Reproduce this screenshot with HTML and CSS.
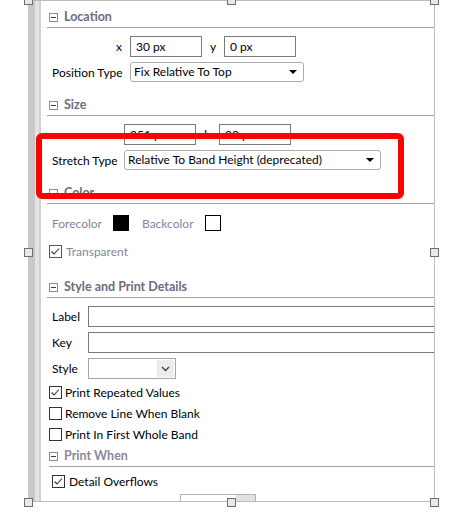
FILE: index.html
```html
<!DOCTYPE html>
<html lang="en">
<head>
<meta charset="utf-8">
<title>Properties</title>
<link rel="stylesheet" href="styles.css">
</head>
<body>
<div class="stage">
  <div class="panel">
    <div class="rail"></div>
    <div class="content">

      <div class="head head-first"><span class="tog"></span><span>Location</span></div>
      <div class="row r-xy">
        <span class="lab lab-loc">x</span>
        <span class="field f-72">30 px</span>
        <span class="lab lab-mid">y</span>
        <span class="field f-72">0 px</span>
      </div>
      <div class="row r-pos">
        <span class="lab lab-pos">Position Type</span>
        <span class="select s-pos">Fix Relative To Top<i class="caret"></i></span>
      </div>

      <div class="head head-size"><span class="tog"></span><span>Size</span></div>
      <div class="row r-wh">
        <span class="lab lab-size">w</span>
        <span class="field f-72">251 px</span>
        <span class="lab lab-midh">h</span>
        <span class="field f-72">22 px</span>
      </div>
      <div class="row r-stretch">
        <span class="lab lab-stretch">Stretch Type</span>
        <span class="select s-stretch">Relative To Band Height (deprecated)<i class="caret"></i></span>
      </div>

      <div class="head head-color"><span class="tog"></span><span>Color</span></div>
      <div class="row r-color dim">
        <span>Forecolor</span>
        <span class="swatch swatch-black"></span>
        <span class="back-lab">Backcolor</span>
        <span class="swatch swatch-white"></span>
      </div>
      <div class="check r-transp dim">
        <span class="box"><svg viewBox="0 0 13 13" width="13" height="13"><polyline points="2.5,6.5 5,9 10,3.5" /></svg></span>
        <span>Transparent</span>
      </div>

      <div class="head head-style"><span class="tog"></span><span>Style and Print Details</span></div>
      <div class="row r-label">
        <span class="lab lab-sp">Label</span>
        <span class="field f-wide"></span>
      </div>
      <div class="row r-key">
        <span class="lab lab-sp">Key</span>
        <span class="field f-wide"></span>
      </div>
      <div class="row r-style">
        <span class="lab lab-sp">Style</span>
        <span class="combo"><span class="combo-btn"><svg viewBox="0 0 9 6" width="9" height="6"><polyline points="1,1 4.5,4.5 8,1" /></svg></span></span>
      </div>
      <div class="check r-c1">
        <span class="box"><svg viewBox="0 0 13 13" width="13" height="13"><polyline points="2.5,6.5 5,9 10,3.5" /></svg></span>
        <span>Print Repeated Values</span>
      </div>
      <div class="check r-c2">
        <span class="box"></span>
        <span>Remove Line When Blank</span>
      </div>
      <div class="check r-c3">
        <span class="box"></span>
        <span>Print In First Whole Band</span>
      </div>

      <div class="head head-when"><span class="tog"></span><span>Print When</span></div>
      <div class="check r-detail">
        <span class="box"><svg viewBox="0 0 13 13" width="13" height="13"><polyline points="2.5,6.5 5,9 10,3.5" /></svg></span>
        <span>Detail Overflows</span>
      </div>
      <div class="expr-btn"></div>
    </div>
  </div>

  <span class="handle h-tl"></span>
  <span class="handle h-tc"></span>
  <span class="handle h-tr"></span>
  <span class="handle h-ml"></span>
  <span class="handle h-mr"></span>
  <span class="handle h-bl"></span>
  <span class="handle h-bc"></span>
  <span class="handle h-br"></span>

  <div class="callout"></div>
</div>
</body>
</html>
```
FILE: styles.css
```css
html, body {
  margin: 0;
  padding: 0;
  background: #ffffff;
}

.stage {
  position: relative;
  width: 457px;
  height: 519px;
  overflow: hidden;
  font-family: Lato, "Noto Sans", sans-serif;
  font-size: 12px;
  color: #000000;
}

/* property sheet */
.panel {
  margin-left: 28px;
  width: 407px;
  height: 502px;
  box-sizing: border-box;
  border-top: 1px solid #bdbdbd;
  border-right: 1px solid #bdbdbd;
  border-bottom: 1px solid #bdbdbd;
  display: flex;
  overflow: hidden;
}

.rail {
  flex: none;
  width: 13px;
  background: linear-gradient(to right, #c8c8c8 0 7px, #e3e3e3 7px 11px, #d0d0d0 11px 13px);
}

.content {
  flex: 1;
  min-width: 0;
  overflow: hidden;
  padding-top: 5px;
}

/* section headers */
.head {
  display: flex;
  align-items: center;
  gap: 6px;
  height: 21px;
  margin-left: 6px;
  padding-left: 2px;
  border-bottom: 1px solid #a3a3a3;
  font-weight: bold;
  font-size: 12.5px;
  color: #6c6c7c;
}

.tog {
  position: relative;
  flex: none;
  width: 9px;
  height: 9px;
  box-sizing: border-box;
  border: 1px solid #8c8c8c;
  margin-top: 2px;
}

.tog::after {
  content: "";
  position: absolute;
  left: 1px;
  right: 1px;
  top: 3px;
  height: 1px;
  background: #3c3c3c;
}

.head-size { margin-top: 12px; }
.head-color { margin-top: 12px; }
.head-style { margin-top: 18px; }
.head-when {
  margin-top: 4px;
  margin-left: 8px;
  padding-left: 0;
  color: #8a8a96;
}

/* rows */
.row {
  display: flex;
  align-items: center;
  margin-left: 11px;
}

.lab {
  flex: none;
  box-sizing: border-box;
}

.lab-loc {
  width: 78px;
  text-align: right;
  padding-right: 8px;
}

.lab-mid {
  width: 22px;
  text-align: center;
}

.lab-pos { width: 78px; }

.lab-size {
  width: 72px;
  text-align: right;
  padding-right: 8px;
}

.lab-midh {
  width: 23px;
  text-align: center;
}

.lab-stretch { width: 72px; }
.lab-sp { width: 36px; }

.field {
  flex: none;
  box-sizing: border-box;
  height: 21px;
  line-height: 19px;
  padding-left: 5px;
  border: 1px solid #7a7a7a;
  background: #ffffff;
}

.f-72 { width: 72px; }
.f-wide { width: 380px; }

.select {
  position: relative;
  flex: none;
  box-sizing: border-box;
  height: 20px;
  line-height: 18px;
  padding-left: 3px;
  border: 1px solid #adadad;
  border-radius: 3px;
  background: #ffffff;
}

.s-pos { width: 174px; }
.s-stretch { width: 257px; }

.caret {
  position: absolute;
  right: 6px;
  top: 7px;
  width: 0;
  height: 0;
  border-left: 4px solid transparent;
  border-right: 4px solid transparent;
  border-top: 4px solid #000000;
}

.r-xy { margin-top: 8px; }
.r-pos { margin-top: 5px; }
.r-wh { margin-top: 8px; }
.r-stretch { margin-top: 5px; }

/* colors */
.dim { color: #85859a; }

.r-color {
  margin-top: 10px;
  height: 18px;
}

.swatch {
  flex: none;
  width: 16px;
  height: 16px;
  box-sizing: border-box;
  margin-left: 11px;
}

.swatch-black { background: #000000; }

.swatch-white {
  background: #ffffff;
  border: 1px solid #000000;
}

.back-lab { margin-left: 13px; }

/* checkboxes */
.check {
  display: flex;
  align-items: center;
  height: 13px;
  margin-left: 8px;
  gap: 3px;
}

.box {
  flex: none;
  width: 13px;
  height: 13px;
  box-sizing: border-box;
  border: 1px solid #333333;
  background: #ffffff;
  position: relative;
}

.box svg {
  position: absolute;
  left: -1px;
  top: -1px;
}

.box polyline {
  fill: none;
  stroke: #333333;
  stroke-width: 1.1;
}

.r-transp { margin-top: 13px; gap: 4px; }
.r-transp .box { border-color: #555555; }

.r-label { margin-top: 8px; }
.r-key { margin-top: 5px; }
.r-style { margin-top: 5px; }

.combo {
  flex: none;
  display: flex;
  justify-content: flex-end;
  align-items: stretch;
  box-sizing: border-box;
  width: 88px;
  height: 21px;
  padding: 1px;
  border: 1px solid #a6a6a6;
  background: #ffffff;
}

.combo-btn {
  width: 17px;
  display: flex;
  align-items: center;
  justify-content: center;
  background: #ececec;
}

.combo-btn polyline {
  fill: none;
  stroke: #404040;
  stroke-width: 1.4;
}

.r-c1 { margin-top: 7px; }
.r-c2 { margin-top: 8px; }
.r-c3 { margin-top: 8px; }

.r-detail {
  margin-top: 8px;
  margin-left: 11px;
  gap: 4px;
}

.expr-btn {
  margin-top: 6px;
  margin-left: 139px;
  width: 76px;
  height: 20px;
  box-sizing: border-box;
  border: 1px solid #b3b3b3;
  background: linear-gradient(to right, #ffffff 0 74%, #e1e1e1 74%);
}

/* selection handles */
.handle {
  position: absolute;
  width: 9px;
  height: 9px;
  box-sizing: border-box;
  border: 1px solid #6e6e6e;
  background: #e8e8e8;
}

.h-tl { left: 24px; top: -4px; }
.h-tc { left: 227px; top: -4px; }
.h-tr { left: 430px; top: -4px; }
.h-ml { left: 24px; top: 248px; }
.h-mr { left: 430px; top: 248px; }
.h-bl { left: 24px; top: 498px; }
.h-bc { left: 227px; top: 498px; }
.h-br { left: 430px; top: 498px; }

/* highlight frame */
.callout {
  position: absolute;
  left: 36px;
  top: 133px;
  width: 368px;
  height: 66px;
  box-sizing: border-box;
  border: 6px solid #ff0000;
  border-radius: 6px;
}
```
